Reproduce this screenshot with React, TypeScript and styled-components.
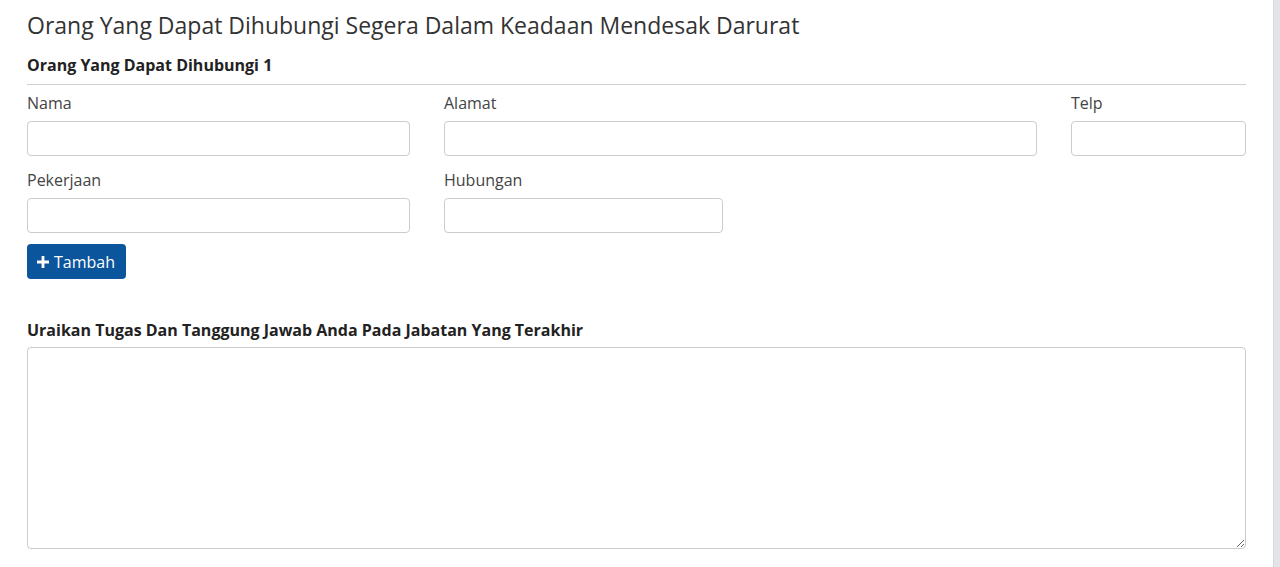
import React from "react";
import styled, { createGlobalStyle } from "styled-components";

const Global = createGlobalStyle`
  html, body { margin: 0; padding: 0; background: #ffffff; }
  body { font-family: "Open Sans", "Noto Sans", sans-serif; color: #333333; }
  * { box-sizing: border-box; }
`;

const Page = styled.div`
  display: flex;
  width: 1280px;
  height: 567px;
  overflow: hidden;
`;

const Main = styled.main`
  flex: 1;
  padding: 9px 0 0 27px;
`;

const ScrollStrip = styled.div`
  width: 7px;
  background: #e2e4e7;
  border-left: 1px solid #d6d9dc;
`;

const Title = styled.h2`
  margin: 0;
  font-size: 23px;
  font-weight: 400;
  line-height: 32px;
  color: #333333;
`;

const SubHeading = styled.h4`
  margin: 13px 0 0;
  font-size: 16px;
  font-weight: 700;
  line-height: 22px;
  color: #222222;
  width: 1219px;
  padding-bottom: 8px;
  border-bottom: 1px solid #cfcfcf;
`;

const FieldRow = styled.div<{ $top: number; $cols: string }>`
  display: grid;
  grid-template-columns: ${(p) => p.$cols};
  column-gap: 34px;
  margin-top: ${(p) => p.$top}px;
`;

const Field = styled.div`
  display: flex;
  flex-direction: column;
`;

const Label = styled.label`
  font-size: 16px;
  line-height: 22px;
  color: #444444;
  margin-bottom: 7px;
`;

const Input = styled.input`
  height: 35px;
  border: 1px solid #cccccc;
  border-radius: 4px;
  background: #ffffff;
  font-family: inherit;
  font-size: 15px;
  padding: 6px 12px;
  outline: none;
`;

const AddButton = styled.button`
  margin-top: 11px;
  display: inline-flex;
  align-items: center;
  gap: 5px;
  height: 35px;
  width: 99px;
  padding: 0 10px;
  border: none;
  border-radius: 4px;
  background: #0b559c;
  color: #ffffff;
  font-family: inherit;
  font-size: 16px;
  cursor: pointer;
`;

const SectionHeading = styled.h4`
  margin: 40px 0 0;
  font-size: 16px;
  font-weight: 700;
  line-height: 22px;
  color: #222222;
`;

const TextArea = styled.textarea`
  display: block;
  margin-top: 6px;
  width: 1219px;
  height: 202px;
  border: 1px solid #cccccc;
  border-radius: 4px;
  font-family: inherit;
  font-size: 15px;
  padding: 6px 12px;
  outline: none;
  resize: vertical;
`;

const PlusIcon = () => (
  <svg width="12" height="12" viewBox="0 0 12 12" aria-hidden="true">
    <path d="M4.6 0h2.8v4.6H12v2.8H7.4V12H4.6V7.4H0V4.6h4.6z" fill="#ffffff" />
  </svg>
);

export default function App() {
  return (
    <>
      <Global />
      <Page>
        <Main>
          <Title>Orang Yang Dapat Dihubungi Segera Dalam Keadaan Mendesak Darurat</Title>
          <SubHeading>Orang Yang Dapat Dihubungi 1</SubHeading>
          <FieldRow $top={7} $cols="383px 593px 175px">
            <Field>
              <Label>Nama</Label>
              <Input />
            </Field>
            <Field>
              <Label>Alamat</Label>
              <Input />
            </Field>
            <Field>
              <Label>Telp</Label>
              <Input />
            </Field>
          </FieldRow>
          <FieldRow $top={13} $cols="383px 279px">
            <Field>
              <Label>Pekerjaan</Label>
              <Input />
            </Field>
            <Field>
              <Label>Hubungan</Label>
              <Input />
            </Field>
          </FieldRow>
          <AddButton>
            <PlusIcon />
            Tambah
          </AddButton>
          <SectionHeading>Uraikan Tugas Dan Tanggung Jawab Anda Pada Jabatan Yang Terakhir</SectionHeading>
          <TextArea />
        </Main>
        <ScrollStrip />
      </Page>
    </>
  );
}
